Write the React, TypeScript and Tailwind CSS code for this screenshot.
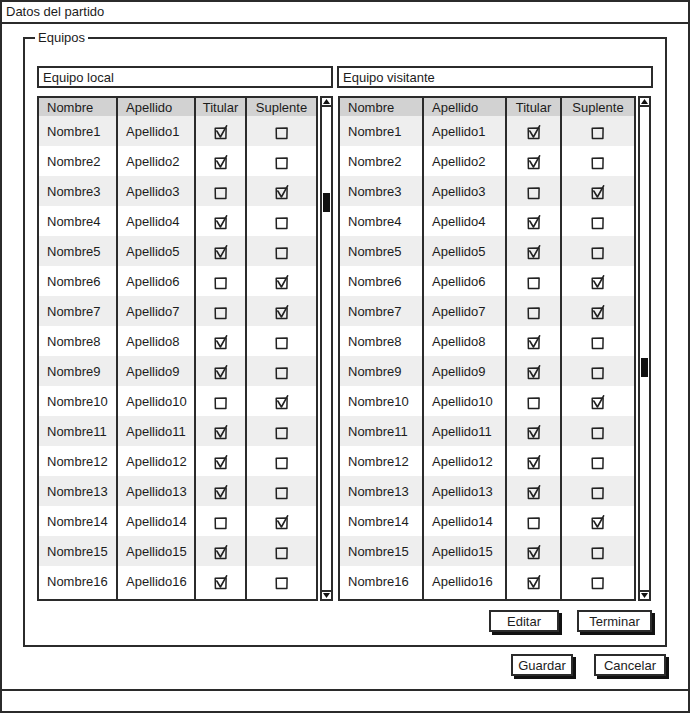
import React from "react";

const pattern: [boolean, boolean][] = [
  [true, false], [true, false], [false, true], [true, false],
  [true, false], [false, true], [false, true], [true, false],
  [true, false], [false, true], [true, false], [true, false],
  [true, false], [false, true], [true, false], [true, false],
];

const rows = pattern.map((p, i) => ({
  nombre: `Nombre${i + 1}`,
  apellido: `Apellido${i + 1}`,
  titular: p[0],
  suplente: p[1],
}));

function Check({ on }: { on: boolean }) {
  return (
    <svg width="16" height="16" viewBox="0 0 16 16" className="block">
      <path d="M2.2 4.3 L13.1 4.1 L12.9 14.6 L2.4 14.4 Z" fill="none" stroke="#222" strokeWidth="1.5" strokeLinejoin="round" />
      {on && (
        <path d="M3.8 7 L7.4 13 L13.6 1.8" fill="none" stroke="#222" strokeWidth="1.6" strokeLinecap="round" strokeLinejoin="round" />
      )}
    </svg>
  );
}

function Column({
  header,
  width,
  align,
  last,
  render,
}: {
  header: string;
  width: string;
  align: "left" | "center";
  last?: boolean;
  render: (r: (typeof rows)[number]) => React.ReactNode;
}) {
  return (
    <div className={`${width} shrink-0 flex flex-col ${last ? "" : "border-r-2 border-[#2b2b2b]"}`}>
      <div
        className={`h-[18px] bg-[#d2d2d2] flex items-center pt-[1px] ${align === "left" ? "pl-[8px]" : "justify-center"}`}
      >
        {header}
      </div>
      {rows.map((r, i) => (
        <div
          key={i}
          className={`h-[30px] flex items-center ${i % 2 === 0 ? "bg-[#eeeeee]" : "bg-white"} ${
            align === "left" ? "pl-[8px] pt-[1px]" : "justify-center pt-[2px]"
          }`}
        >
          {render(r)}
        </div>
      ))}
    </div>
  );
}

function Table({ widths, tableW }: { widths: string[]; tableW: string }) {
  return (
    <div className={`${tableW} h-[505px] border-2 border-[#2b2b2b] flex bg-white`}>
      <Column header="Nombre" width={widths[0]} align="left" render={(r) => r.nombre} />
      <Column header="Apellido" width={widths[1]} align="left" render={(r) => r.apellido} />
      <Column header="Titular" width={widths[2]} align="center" render={(r) => <Check on={r.titular} />} />
      <Column header="Suplente" width={widths[3]} align="center" last render={(r) => <Check on={r.suplente} />} />
    </div>
  );
}

function Scrollbar({ thumbTop }: { thumbTop: string }) {
  return (
    <div className="w-[13px] h-[505px] border-2 border-[#2b2b2b] flex flex-col bg-white relative">
      <div className="h-[9px] border-b-2 border-[#2b2b2b] flex items-center justify-center">
        <svg width="7" height="5" viewBox="0 0 7 5"><path d="M0 5 L3.5 0 L7 5 Z" fill="#111" /></svg>
      </div>
      <div className="flex-1" />
      <div className="h-[9px] border-t-2 border-[#2b2b2b] flex items-center justify-center">
        <svg width="7" height="5" viewBox="0 0 7 5"><path d="M0 0 L3.5 5 L7 0 Z" fill="#111" /></svg>
      </div>
      <div className={`absolute left-[1px] ${thumbTop} w-[7px] h-[19px] bg-[#111]`} />
    </div>
  );
}

function Btn({ label, w }: { label: string; w: string }) {
  return (
    <div
      className={`${w} h-[22px] border-2 border-[#2b2b2b] bg-white flex items-center justify-center shadow-[3px_3px_0_#111]`}
    >
      {label}
    </div>
  );
}

export default function App() {
  return (
    <div className="w-[690px] h-[714px] bg-white text-[13px] text-[#1c1c1c] font-['Liberation_Sans',Arial,sans-serif] leading-none">
      <div className="w-[690px] h-[713px] border-2 border-[#2b2b2b] flex flex-col">
        <div className="h-[22px] border-b-2 border-[#2b2b2b] flex items-center pl-[4px] pb-[1px]">
          Datos del partido
        </div>
        <div className="mt-[13px] mx-[21px] h-[610px] border-2 border-[#2b2b2b] relative flex flex-col">
          <div className="absolute left-[10px] top-[-8px] bg-white px-[3px]">Equipos</div>
          <div className="flex pl-[12px] pt-[27px] gap-[4px]">
            <div className="flex flex-col">
              <div className="w-[296px] h-[22px] border-2 border-[#2b2b2b] flex items-center pl-[4px]">
                Equipo local
              </div>
              <div className="flex mt-[8px] gap-[2px]">
                <Table tableW="w-[281px]" widths={["w-[79px]", "w-[78px]", "w-[51px]", "w-[69px]"]} />
                <Scrollbar thumbTop="top-[95px]" />
              </div>
            </div>
            <div className="flex flex-col">
              <div className="w-[316px] h-[22px] border-2 border-[#2b2b2b] flex items-center pl-[4px]">
                Equipo visitante
              </div>
              <div className="flex mt-[8px] ml-[1px] gap-[2px]">
                <Table tableW="w-[298px]" widths={["w-[84px]", "w-[83px]", "w-[55px]", "w-[72px]"]} />
                <Scrollbar thumbTop="top-[260px]" />
              </div>
            </div>
          </div>
          <div className="flex justify-end gap-[18px] pr-[13px] mt-[9px]">
            <Btn label="Editar" w="w-[70px]" />
            <Btn label="Terminar" w="w-[75px]" />
          </div>
        </div>
        <div className="flex justify-end gap-[21px] pr-[22px] mt-[7px]">
          <Btn label="Guardar" w="w-[62px]" />
          <Btn label="Cancelar" w="w-[72px]" />
        </div>
        <div className="flex-1" />
        <div className="h-[22px] border-t-2 border-[#2b2b2b]" />
      </div>
    </div>
  );
}
